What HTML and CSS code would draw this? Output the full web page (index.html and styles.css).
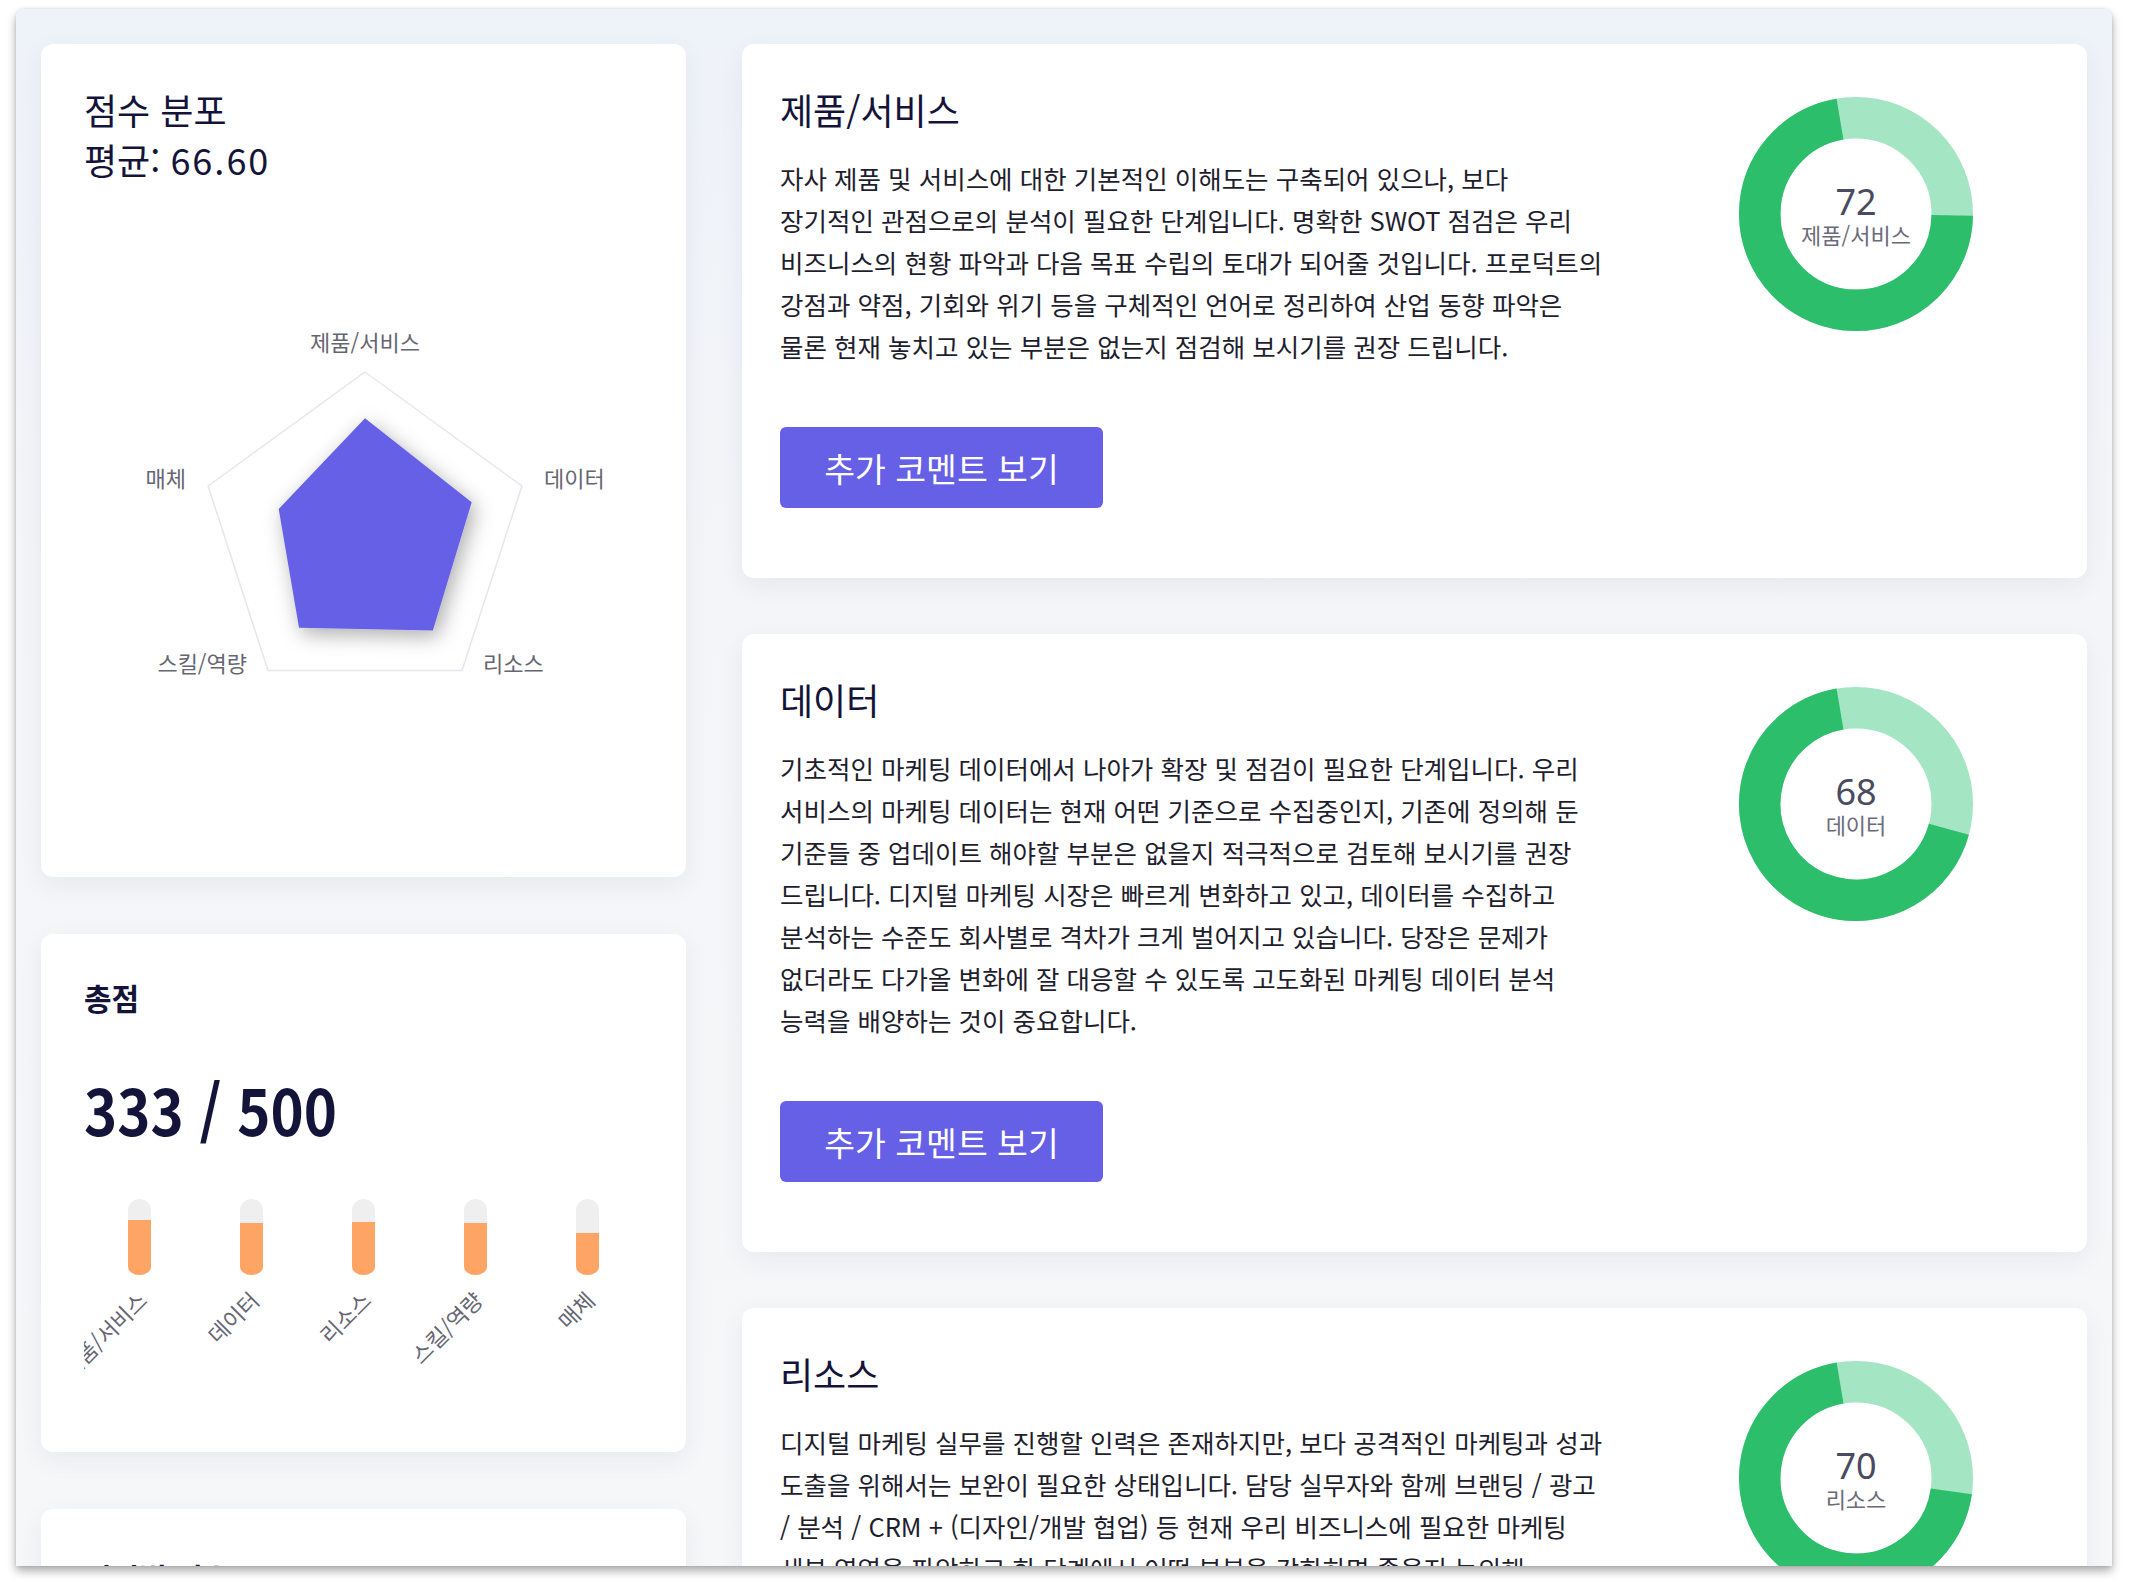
FILE: index.html
```html
<!DOCTYPE html>
<html lang="ko">
<head>
<meta charset="utf-8">
<title>마케팅 진단 결과</title>
<link rel="stylesheet" href="styles.css">
</head>
<body>
<div class="window">
  <div class="layout">
    <div class="col-left">
      <section class="card radar-card">
        <h2 class="radar-title">점수 분포<br>평균: <span class="avg-num">66.60</span></h2>
        <svg class="radar" viewBox="0 0 559 653" width="559" height="653">
          <defs>
            <filter id="polyShadow" x="-40%" y="-40%" width="180%" height="180%">
              <feDropShadow dx="4" dy="6" stdDeviation="10" flood-color="#000" flood-opacity="0.32"/>
            </filter>
          </defs>
          <polygon class="radar-grid" points="281,188 437.9,302 378,486.5 184,486.5 124.1,302"/>
          <polygon class="radar-data" filter="url(#polyShadow)" points="281,234.2 387.7,318.3 348.9,446.4 215,443.8 194.7,325"/>
          <text class="radar-label" x="281" y="167" text-anchor="middle">제품/서비스</text>
          <text class="radar-label" x="460" y="303" text-anchor="start">데이터</text>
          <text class="radar-label" x="399" y="488" text-anchor="start">리소스</text>
          <text class="radar-label" x="163" y="488" text-anchor="end">스킬/역량</text>
          <text class="radar-label" x="102" y="303" text-anchor="end">매체</text>
        </svg>
      </section>

      <section class="card total-card">
        <h3 class="total-title">총점</h3>
        <div class="total-score">333 / 500</div>
        <div class="bars">
          <div class="bar-col">
            <div class="bar-track"><div class="bar-fill" style="height:72%"></div></div>
            <span class="bar-label">제품/서비스</span>
          </div>
          <div class="bar-col">
            <div class="bar-track"><div class="bar-fill" style="height:68%"></div></div>
            <span class="bar-label">데이터</span>
          </div>
          <div class="bar-col">
            <div class="bar-track"><div class="bar-fill" style="height:70%"></div></div>
            <span class="bar-label">리소스</span>
          </div>
          <div class="bar-col">
            <div class="bar-track"><div class="bar-fill" style="height:68%"></div></div>
            <span class="bar-label">스킬/역량</span>
          </div>
          <div class="bar-col">
            <div class="bar-track"><div class="bar-fill" style="height:55%"></div></div>
            <span class="bar-label">매체</span>
          </div>
        </div>
      </section>

      <section class="card extra-card">
        <h3 class="total-title">영역별 점수</h3>
      </section>
    </div>

    <div class="col-right">
      <article class="card comment-card">
        <div class="comment-body">
          <h2 class="comment-title">제품/서비스</h2>
          <p class="comment-text">자사 제품 및 서비스에 대한 기본적인 이해도는 구축되어 있으나, 보다 장기적인 관점으로의 분석이 필요한 단계입니다. 명확한 SWOT 점검은 우리 비즈니스의 현황 파악과 다음 목표 수립의 토대가 되어줄 것입니다. 프로덕트의 강점과 약점, 기회와 위기 등을 구체적인 언어로 정리하여 산업 동향 파악은 물론 현재 놓치고 있는 부분은 없는지 점검해 보시기를 권장 드립니다.</p>
          <button class="more-btn" type="button">추가 코멘트 보기</button>
        </div>
        <div class="donut-col">
          <div class="donut">
            <svg viewBox="0 0 234 234" width="234" height="234">
              <circle class="donut-rest" cx="117" cy="117" r="96.25"/>
              <circle class="donut-value" cx="117" cy="117" r="96.25" stroke-dasharray="435.43 604.76" transform="rotate(0.8 117 117)"/>
            </svg>
            <div class="donut-center">
              <span class="donut-num">72</span>
              <span class="donut-name">제품/서비스</span>
            </div>
          </div>
        </div>
      </article>

      <article class="card comment-card">
        <div class="comment-body">
          <h2 class="comment-title">데이터</h2>
          <p class="comment-text">기초적인 마케팅 데이터에서 나아가 확장 및 점검이 필요한 단계입니다. 우리 서비스의 마케팅 데이터는 현재 어떤 기준으로 수집중인지, 기존에 정의해 둔 기준들 중 업데이트 해야할 부분은 없을지 적극적으로 검토해 보시기를 권장 드립니다. 디지털 마케팅 시장은 빠르게 변화하고 있고, 데이터를 수집하고 분석하는 수준도 회사별로 격차가 크게 벌어지고 있습니다. 당장은 문제가 없더라도 다가올 변화에 잘 대응할 수 있도록 고도화된 마케팅 데이터 분석 능력을 배양하는 것이 중요합니다.</p>
          <button class="more-btn" type="button">추가 코멘트 보기</button>
        </div>
        <div class="donut-col">
          <div class="donut">
            <svg viewBox="0 0 234 234" width="234" height="234">
              <circle class="donut-rest" cx="117" cy="117" r="96.25"/>
              <circle class="donut-value" cx="117" cy="117" r="96.25" stroke-dasharray="411.24 604.76" transform="rotate(15.2 117 117)"/>
            </svg>
            <div class="donut-center">
              <span class="donut-num">68</span>
              <span class="donut-name">데이터</span>
            </div>
          </div>
        </div>
      </article>

      <article class="card comment-card">
        <div class="comment-body">
          <h2 class="comment-title">리소스</h2>
          <p class="comment-text">디지털 마케팅 실무를 진행할 인력은 존재하지만, 보다 공격적인 마케팅과 성과 도출을 위해서는 보완이 필요한 상태입니다. 담당 실무자와 함께 브랜딩 / 광고 / 분석 / CRM + (디자인/개발 협업) 등 현재 우리 비즈니스에 필요한 마케팅 세부 영역을 파악하고 한 단계에서 어떤 부분을 강화하면 좋을지 논의해 보시기를 권장 드립니다.</p>
          <button class="more-btn" type="button">추가 코멘트 보기</button>
        </div>
        <div class="donut-col">
          <div class="donut">
            <svg viewBox="0 0 234 234" width="234" height="234">
              <circle class="donut-rest" cx="117" cy="117" r="96.25"/>
              <circle class="donut-value" cx="117" cy="117" r="96.25" stroke-dasharray="423.33 604.76" transform="rotate(8 117 117)"/>
            </svg>
            <div class="donut-center">
              <span class="donut-num">70</span>
              <span class="donut-name">리소스</span>
            </div>
          </div>
        </div>
      </article>
    </div>
  </div>
</div>
</body>
</html>
```

FILE: styles.css
```css
* {
  box-sizing: border-box;
}

html, body {
  margin: 0;
  padding: 0;
}

body {
  width: 2130px;
  height: 1589px;
  overflow: hidden;
  background: #ffffff;
  font-family: "Noto Sans CJK KR", "Noto Sans", sans-serif;
  color: #14143a;
}

.window {
  margin: 9px 0 0 16px;
  width: 2096px;
  height: 1557px;
  overflow: hidden;
  border-radius: 8px 8px 0 0;
  background: linear-gradient(180deg, #eef2f9 0%, #f3f5f8 35%, #f6f7f8 100%);
  box-shadow: 0 5px 10px rgba(0, 0, 0, 0.33), 0 0 3px rgba(0, 0, 0, 0.12);
}

.layout {
  display: flex;
  align-items: flex-start;
  gap: 56px;
  padding: 35px 25px 0 25px;
}

.col-left {
  width: 645px;
  flex-shrink: 0;
  display: flex;
  flex-direction: column;
  gap: 57px;
}

.col-right {
  flex: 1;
  display: flex;
  flex-direction: column;
  gap: 56px;
}

.card {
  background: #ffffff;
  border-radius: 12px;
  box-shadow: 0 8px 26px rgba(30, 40, 80, 0.06);
}

/* ---------- radar card ---------- */
.radar-card {
  height: 833px;
  padding: 40px 43px;
}

.radar-title {
  margin: 0;
  font-size: 36px;
  line-height: 50px;
  font-weight: 400;
  color: #14143a;
}

.avg-num {
  letter-spacing: 2px;
}

.radar {
  display: block;
}

.radar-grid {
  fill: none;
  stroke: #e6e6f0;
  stroke-width: 1.5;
}

.radar-data {
  fill: #6561e6;
}

.radar-label {
  font-family: "Noto Sans CJK KR", "Noto Sans", sans-serif;
  font-size: 22px;
  fill: #666673;
}

/* ---------- total card ---------- */
.total-card {
  height: 518px;
  padding: 42px 43px 40px;
}

.total-title {
  margin: 0;
  font-size: 30px;
  line-height: 42px;
  font-weight: 700;
  color: #14143a;
}

.total-score {
  margin-top: 52px;
  font-size: 64px;
  line-height: 77px;
  font-weight: 700;
  color: #14143a;
  transform: scaleX(0.88);
  transform-origin: 0 50%;
}

.bars {
  margin-top: 52px;
  height: 213px;
  display: flex;
  position: relative;
  overflow: hidden;
}

.bar-col {
  flex: 1;
  position: relative;
}

.bar-track {
  position: relative;
  width: 23px;
  height: 76px;
  margin: 0 auto;
  background: #efefef;
  border-radius: 12px 12px 12px 12px / 12px 12px 9px 9px;
  overflow: hidden;
}

.bar-fill {
  position: absolute;
  left: 0;
  right: 0;
  bottom: 0;
  background: #fea465;
}

.bar-label {
  position: absolute;
  top: 85px;
  right: calc(50% - 2px);
  height: 22px;
  font-size: 22px;
  line-height: 22px;
  white-space: nowrap;
  color: #666673;
  transform-origin: 100% 50%;
  transform: rotate(-45deg);
}

/* ---------- extra card ---------- */
.extra-card {
  height: 400px;
  padding: 47px 43px 40px;
}

/* ---------- comment cards ---------- */
.comment-card {
  display: flex;
  gap: 57px;
  padding: 40px 38px 70px;
}

.comment-body {
  width: 826px;
  flex-shrink: 0;
}

.comment-title {
  margin: 0;
  font-size: 36px;
  line-height: 51px;
  font-weight: 400;
  color: #14143a;
}

.comment-text {
  margin: 22px 0 0;
  font-size: 25.5px;
  line-height: 42px;
  color: #1e1e2e;
  word-break: keep-all;
}

.more-btn {
  display: flex;
  align-items: center;
  justify-content: center;
  margin-top: 60px;
  width: 323px;
  height: 81px;
  padding: 0;
  border: 0;
  border-radius: 6px;
  background: #6660e6;
  color: #ffffff;
  font-family: "Noto Sans CJK KR", "Noto Sans", sans-serif;
  font-size: 33.5px;
  font-weight: 400;
}

.donut-col {
  flex: 1;
  display: flex;
  justify-content: center;
  padding-top: 13px;
}

.donut {
  position: relative;
  width: 234px;
  height: 234px;
}

.donut svg {
  display: block;
}

.donut-rest {
  fill: none;
  stroke: #a4e5c3;
  stroke-width: 41.5;
}

.donut-value {
  fill: none;
  stroke: #2dbe6c;
  stroke-width: 41.5;
}

.donut-center {
  position: absolute;
  top: 87px;
  left: 0;
  right: 0;
  text-align: center;
}

.donut-num {
  display: block;
  font-family: "Noto Sans", "Noto Sans CJK KR", sans-serif;
  font-size: 36px;
  line-height: 36px;
  color: #4a4a60;
}

.donut-name {
  display: block;
  margin-top: 2px;
  font-size: 22px;
  line-height: 24px;
  color: #6b6b7b;
}
```
